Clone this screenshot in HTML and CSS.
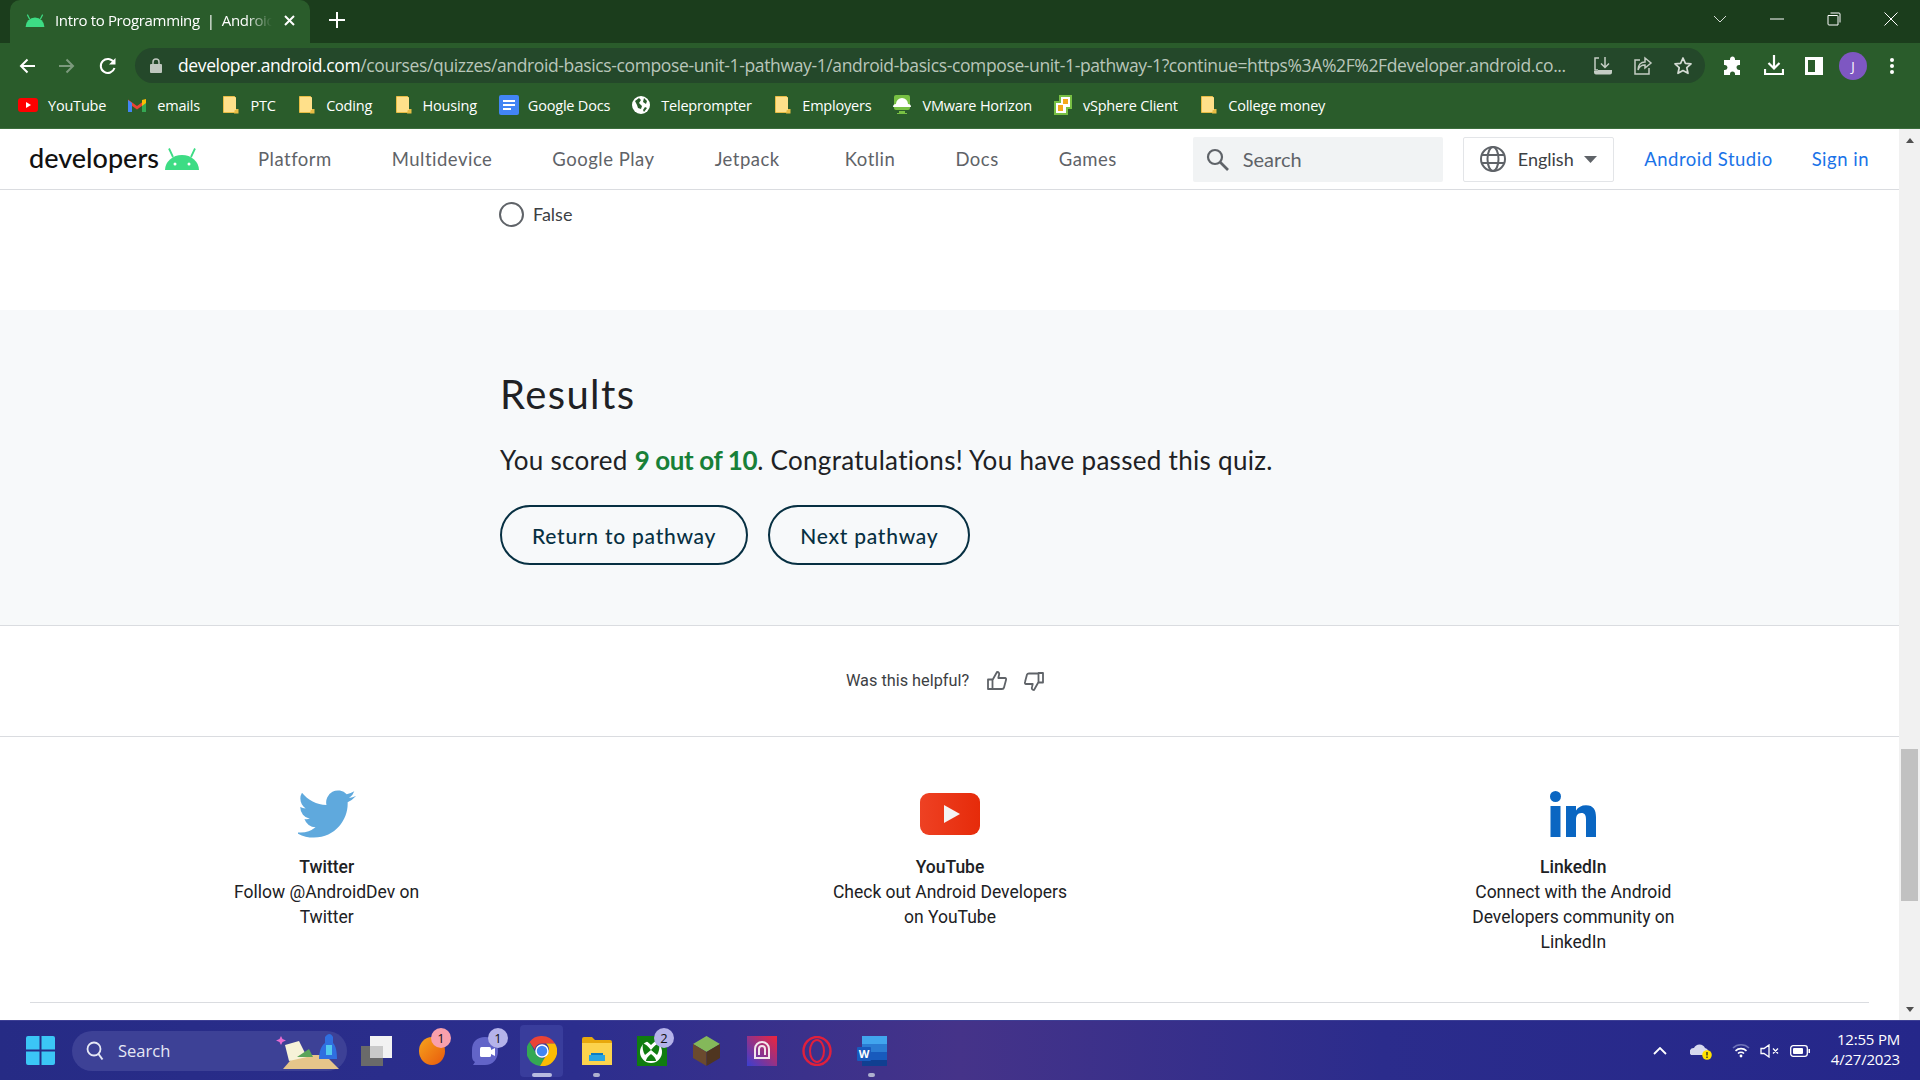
FILE: index.html
```html
<!DOCTYPE html>
<html lang="en">
<head>
<meta charset="utf-8">
<title>Intro to Programming | Android Developers</title>
<link rel="stylesheet" href="styles.css">
</head>
<body>
<div class="screen">
  <div class="tabstrip">
    <div class="tab">
      <svg class="fav" width="20" height="13" viewBox="0 0 34 22"><path fill="#3ddc84" d="M1 22a16 16 0 0 1 32 0z"/><path stroke="#3ddc84" stroke-width="2" d="M8 9 4 1M26 9l4-8"/></svg>
      <span class="tab-title">Intro to Programming&nbsp; |&nbsp; Android Developers</span>
      <svg class="tab-x" width="11" height="11" viewBox="0 0 11 11"><path stroke="#fff" stroke-width="2" d="M1 1l9 9M10 1l-9 9"/></svg>
    </div>
    <svg class="newtab" width="16" height="16" viewBox="0 0 16 16"><path stroke="#fff" stroke-width="2" d="M8 0v16M0 8h16"/></svg>
    <div class="winctl">
      <svg width="14" height="8" viewBox="0 0 14 8"><path fill="none" stroke="#d5dcd5" d="M1 1l6 6 6-6"/></svg>
      <svg width="14" height="2" viewBox="0 0 14 2"><path stroke="#fff" d="M0 1h14"/></svg>
      <svg width="14" height="14" viewBox="0 0 14 14"><path fill="none" stroke="#fff" d="M1 3.500h9a1 1 0 0 1 1 1V13H2a1 1 0 0 1-1-1zM3.500 1H12a1 1 0 0 1 1 1v8.500"/></svg>
      <svg width="14" height="14" viewBox="0 0 14 14"><path stroke="#fff" d="M.5.500l13 13M13.500.500l-13 13"/></svg>
    </div>
  </div>
  <div class="toolbar">
    <div class="nav-btns">
      <svg width="16" height="16" viewBox="0 0 16 16"><path fill="none" stroke="#fff" stroke-width="2" d="M16 8H2M8.500 1.500 2 8l6.500 6.500"/></svg>
      <svg width="18" height="16" viewBox="0 0 16 16"><path fill="none" stroke="#7c9a7d" stroke-width="2" d="M0 8h14M7.500 1.500 14 8l-6.500 6.500"/></svg>
      <svg width="18" height="18" viewBox="0 0 18 18"><path fill="none" stroke="#fff" stroke-width="2" d="M15.500 11a7 7 0 1 1-.7-5.700"/><path fill="#fff" d="M16.500 1v6.500H10z"/></svg>
    </div>
    <div class="omnibox">
      <svg width="12" height="15" viewBox="0 0 12 15"><path fill="none" stroke="#bfc7bf" stroke-width="1.500" d="M3 6V4a3 3 0 0 1 6 0v2"/><rect y="6" width="12" height="9" rx="1" fill="#bfc7bf"/></svg>
      <span class="url"><span class="url-host">developer.android.com</span>/courses/quizzes/android-basics-compose-unit-1-pathway-1/android-basics-compose-unit-1-pathway-1?continue=https%3A%2F%2Fdeveloper.android.co...</span>
      <div class="omni-icons">
        <svg width="20" height="20" viewBox="0 0 20 20"><path fill="none" stroke="#c4cdc4" stroke-width="1.500" d="M6 2H2v12h3M12 1v10M8 7.500l4 4 4-4"/><path fill="#c4cdc4" d="M1 15h18v1.500a2 2 0 0 1-2 2H3a2 2 0 0 1-2-2zM5 14h14v1H5z"/></svg>
        <svg width="20" height="20" viewBox="0 0 20 20"><path fill="none" stroke="#c4cdc4" stroke-width="1.500" d="M7 4H2v14h14v-6M12 2l6 5-6 5V9c-4 0-6 2-7 5 0-5 3-8 7-8z"/></svg>
        <svg width="20" height="20" viewBox="0 0 20 20"><path fill="none" stroke="#d5dcd5" stroke-width="1.700" stroke-linejoin="round" d="M10 2l2.400 5.300 5.600.6-4.200 3.800 1.200 5.600L10 14.500l-5 2.800 1.200-5.600L2 7.900l5.600-.6z"/></svg>
      </div>
    </div>
    <div class="tool-icons">
      <svg width="20" height="20" viewBox="0 0 20 20"><path fill="#fff" d="M8 1a2.500 2.500 0 0 1 4 2v1h5v5h-1a2.500 2.500 0 0 0 0 5h1v5h-5v-1a2.500 2.500 0 0 0-5 0v1H1v-5h1a2.500 2.500 0 0 0 0-5H1V4h6V3c0-.7.3-1.500 1-2z"/></svg>
      <svg width="20" height="21" viewBox="0 0 20 21"><path fill="none" stroke="#fff" stroke-width="2.200" d="M10 0v13M4.500 8l5.500 5.500L15.500 8M1 14v5h18v-5"/></svg>
      <svg width="18" height="18" viewBox="0 0 18 18"><path fill="#fff" d="M0 0h18v18H0zM3 3v12h7V3z" fill-rule="evenodd"/></svg>
      <span class="avatar">J</span>
      <svg class="kebab" width="4" height="16" viewBox="0 0 4 16"><circle cx="2" cy="2" r="2" fill="#fff"/><circle cx="2" cy="8" r="2" fill="#fff"/><circle cx="2" cy="14" r="2" fill="#fff"/></svg>
    </div>
  </div>
  <div class="bookmarks">
    <span class="bm bm-yt"><svg width="20" height="14" viewBox="0 0 20 14"><rect width="20" height="14" rx="3" fill="#f00"/><path fill="#fff" d="M8 4l5 3-5 3z"/></svg>YouTube</span>
    <span class="bm"><svg width="18" height="14" viewBox="0 0 18 14"><path fill="#ea4335" d="M0 1.500 9 8l9-6.500V5L9 11.500 0 5z"/><path fill="#4285f4" d="M0 2v12h4V5z"/><path fill="#34a853" d="M18 2v12h-4V5z"/><path fill="#fbbc04" d="M14 2l4-1v4l-4 3z"/></svg>emails</span>
    <span class="bm"><svg class="fold" width="16" height="18" viewBox="0 0 16 18"><use href="#folder"/></svg>PTC</span>
    <span class="bm"><svg class="fold" width="16" height="18" viewBox="0 0 16 18"><use href="#folder"/></svg>Coding</span>
    <span class="bm"><svg class="fold" width="16" height="18" viewBox="0 0 16 18"><use href="#folder"/></svg>Housing</span>
    <span class="bm bm-docs"><svg width="20" height="20" viewBox="0 0 20 20"><rect width="20" height="20" rx="2" fill="#4285f4"/><path fill="#fff" d="M4 5h12v2H4zM4 9h12v2H4zM4 13h8v2H4z"/></svg>Google Docs</span>
    <span class="bm"><svg width="18" height="18" viewBox="0 0 18 18"><circle cx="9" cy="9" r="9" fill="#fff"/><path fill="#2a5c2b" d="M3 5l4-3 2 2-2 3 3 3-1 3-3-1-1-3zM12 2l3 3-1 3-3-2zM13 11l2 1-3 4-1-2z"/></svg>Teleprompter</span>
    <span class="bm"><svg class="fold" width="16" height="18" viewBox="0 0 16 18"><use href="#folder"/></svg>Employers</span>
    <span class="bm"><svg width="18" height="20" viewBox="0 0 18 20"><path fill="#78c043" d="M1 2a2 2 0 0 1 2-2h12a2 2 0 0 1 2 2v11a2 2 0 0 1-2 2H3a2 2 0 0 1-2-2zM6 16h6v2h2v1H4v-1h2z"/><path fill="#fff" d="M0 12a3 3 0 0 1 3-3 6 6 0 0 1 12 0 3 3 0 0 1 3 3z"/></svg>VMware Horizon</span>
    <span class="bm"><svg width="18" height="20" viewBox="0 0 18 20"><path fill="#78c043" d="M5 0h13v14h-4v6H0V6h5z"/><path fill="#fff" d="M7 2h9v10H7zM2 8h10v10H2z"/><path fill="#f5a81c" d="M9 4h5v5H9zM4 10h5v6H4z"/></svg>vSphere Client</span>
    <span class="bm"><svg class="fold" width="16" height="18" viewBox="0 0 16 18"><use href="#folder"/></svg>College money</span>
    <svg class="defs" width="0" height="0"><defs><g id="folder"><path fill="#ffe08a" stroke="#e8bd45" d="M.5.500h11l1 1v15h-12z"/><path fill="#e8bd45" d="M12 13h3.500v4.500H11z"/><path fill="#ffe08a" d="M12 1h-.5v13H13V2z"/></g></defs></svg>
  </div>

  <div class="viewport">
    <div class="page">
      <header class="site-head">
        <div class="logo"><span class="logo-word">developers</span>
          <svg width="34" height="22" viewBox="0 0 34 22"><path fill="#3ddc84" d="M0 22a17 15 0 0 1 34 0z"/><path stroke="#3ddc84" stroke-width="1.800" d="M8 9 4 .500M26 9l4-8.500"/><circle cx="10" cy="16" r="1.500" fill="#fff"/><circle cx="24" cy="16" r="1.500" fill="#fff"/></svg>
        </div>
        <nav class="site-nav">
          <a>Platform</a><a>Multidevice</a><a>Google Play</a><a class="nav-jet">Jetpack</a><a>Kotlin</a><a>Docs</a><a>Games</a>
        </nav>
        <div class="search">
          <svg width="23" height="23" viewBox="0 0 23 23"><circle cx="9" cy="9" r="7" fill="none" stroke="#5f6368" stroke-width="2.200"/><path stroke="#5f6368" stroke-width="2.600" d="M14 14l8 8"/></svg>
          <span>Search</span>
        </div>
        <div class="lang">
          <svg width="26" height="26" viewBox="0 0 26 26"><g fill="none" stroke="#5f6368" stroke-width="2"><circle cx="13" cy="13" r="12"/><ellipse cx="13" cy="13" rx="5.500" ry="12"/><path d="M2 9h22M2 17h22"/></g></svg>
          <span>English</span>
          <svg width="13" height="7" viewBox="0 0 13 7"><path fill="#5f6368" d="M0 0h13L6.500 7z"/></svg>
        </div>
        <a class="head-link studio">Android Studio</a>
        <a class="head-link">Sign in</a>
      </header>

      <section class="question">
        <span class="radio"></span><span class="false-label">False</span>
      </section>

      <section class="results">
        <h1>Results</h1>
        <p class="score">You scored <span class="pass">9 out of 10</span>. Congratulations! You have passed this quiz.</p>
        <div class="actions"><a class="pill">Return to pathway</a><a class="pill">Next pathway</a></div>
      </section>

      <section class="helpful">
        <span>Was this helpful?</span>
        <svg width="20" height="20" viewBox="0 0 20 20"><path fill="none" stroke="#5f6368" stroke-width="1.800" stroke-linejoin="round" d="M1 8.500h4.500V18H1zM5.500 9 10 1c2 0 2.500 1.500 2 3l-.7 3H18c1 0 1.300 1 1 2l-2 7.500c-.2 1-1 1.500-2 1.500H5.500"/></svg>
        <svg width="20" height="20" viewBox="0 0 20 20"><path fill="none" stroke="#5f6368" stroke-width="1.800" stroke-linejoin="round" d="M19 11.500h-4.500V2H19zM14.500 11 10 19c-2 0-2.500-1.500-2-3l.7-3H2c-1 0-1.300-1-1-2l2-7.500C3.200 3 4 2.500 5 2.500h9.500"/></svg>
      </section>

      <section class="social">
        <div class="social-item">
          <div class="social-icon"><svg width="58" height="50" viewBox="0 0 24 20"><path fill="#5fa9dd" d="M23.953 2.570a10 10 0 0 1-2.825.775 4.958 4.958 0 0 0 2.163-2.723c-.951.555-2.005.959-3.127 1.184a4.920 4.920 0 0 0-8.384 4.482C7.690 6.095 4.067 4.130 1.640 1.162a4.822 4.822 0 0 0-.666 2.475c0 1.710.87 3.213 2.188 4.096a4.904 4.904 0 0 1-2.228-.616v.06a4.923 4.923 0 0 0 3.946 4.827 4.996 4.996 0 0 1-2.212.085 4.936 4.936 0 0 0 4.604 3.417A9.867 9.867 0 0 1 .170 17.611c-.39 0-.779-.023-1.170-.067a13.995 13.995 0 0 0 7.557 2.209c9.053 0 13.998-7.496 13.998-13.985 0-.21 0-.42-.015-.63A9.935 9.935 0 0 0 24 2.590z"/></svg></div>
          <div class="social-title">Twitter</div>
          <div>Follow @AndroidDev on Twitter</div>
        </div>
        <div class="social-item">
          <div class="social-icon"><svg width="60" height="42" viewBox="0 0 60 42"><defs><linearGradient id="yt" x1="0" x2="1" y1="0" y2="0"><stop offset="0" stop-color="#ee4123"/><stop offset="1" stop-color="#e62b0a"/></linearGradient></defs><rect width="60" height="42" rx="9" fill="url(#yt)"/><path fill="#f4f4f4" d="M24 12l16 9-16 9z"/></svg></div>
          <div class="social-title">YouTube</div>
          <div>Check out Android Developers on YouTube</div>
        </div>
        <div class="social-item">
          <div class="social-icon"><svg width="46" height="46" viewBox="0 0 46 46"><circle cx="5.500" cy="5.500" r="5.500" fill="#0a66c2"/><path fill="#0a66c2" d="M.5 15h10v31H.5zM16 15h10v4.500c2-3.300 5.500-5.300 10-5.300 7.500 0 10 4.800 10 12V46H36V28.500c0-4-1-6.500-4.700-6.500-4 0-5.300 3-5.300 6.800V46H16z"/></svg></div>
          <div class="social-title">LinkedIn</div>
          <div>Connect with the Android Developers community on LinkedIn</div>
        </div>
      </section>
      <div class="foot-rule"></div>
    </div>
    <div class="scrollbar">
      <span class="arrow-up"></span>
      <div class="track"><div class="thumb"></div></div>
      <span class="arrow-down"></span>
    </div>
  </div>

  <footer class="taskbar">
    <svg class="start" width="29" height="29" viewBox="0 0 29 29"><path fill="#3bc6f6" d="M0 2a2 2 0 0 1 2-2h11.500v13.500H0zM15.500 0H27a2 2 0 0 1 2 2v11.500H15.500zM0 15.500h13.500V29H2a2 2 0 0 1-2-2zM15.500 15.500H29V27a2 2 0 0 1-2 2H15.500z"/></svg>
    <div class="task-search">
      <svg width="18" height="20" viewBox="0 0 18 20"><circle cx="8" cy="8" r="6.500" fill="none" stroke="#e6e8f5" stroke-width="1.800"/><path stroke="#e6e8f5" stroke-width="2" d="M12.500 13l4 5.500"/></svg>
      <span>Search</span>
      <svg class="doodle" width="66" height="36" viewBox="0 0 66 36"><path fill="#e6c58a" d="M8 36l12-14h30l14 14z"/><path fill="#f6f2d8" d="M14 28 10 12l14-4 8 16z"/><path fill="#5aa45a" d="M22 24l12-8 4 8z"/><path fill="#2f6fe0" d="M50 4c3-4 6-4 8 0v6c3 3 4 9 4 16H44c0-7 2-13 6-16z"/><path fill="#52c9ee" d="M51 12h6v10h-6z"/><path fill="#e66bd0" d="M6 3l1.500 3L11 7.500 7.500 9 6 12 4.500 9 1 7.500 4.500 6z"/></svg>
    </div>
    <div class="task-apps">
      <span class="slot"><svg width="31" height="30" viewBox="0 0 31 30"><rect x="9" width="22" height="22" fill="#f2f2f2"/><rect y="10" width="22" height="20" fill="#6a6a6a"/><rect x="9" y="10" width="13" height="12" fill="#c9c9c9"/></svg></span>
      <span class="slot"><svg width="26" height="28" viewBox="0 0 26 28"><defs><linearGradient id="or" x1="0" x2="1" y1="0" y2="1"><stop offset="0" stop-color="#f7a41d"/><stop offset="1" stop-color="#e8590c"/></linearGradient></defs><ellipse cx="13" cy="14" rx="13" ry="14" fill="url(#or)"/></svg><b class="badge pink">1</b></span>
      <span class="slot slot-teams"><svg width="28" height="30" viewBox="0 0 28 30"><path fill="#6264c8" d="M14 1C6 1 1 6 1 14v6c0 3 1 5 3 6l-2 3h12c8 0 13-6 13-14S22 1 14 1z"/><rect x="9" y="11" width="11" height="10" rx="1.500" fill="#fff"/><path fill="#fff" d="M20 14l4-2v8l-4-2z"/></svg><b class="badge lav">1</b></span>
      <span class="slot slot-active"><svg width="30" height="30" viewBox="0 0 30 30"><path fill="#ea4335" d="M15 0a15 15 0 0 1 13 7.500H15a7.500 7.500 0 0 0-7.300 5.700L2.500 6A15 15 0 0 1 15 0z"/><path fill="#34a853" d="M2.500 6l6 10.500A7.500 7.500 0 0 0 18 22l-5 8A15 15 0 0 1 2.500 6z"/><path fill="#fbbc04" d="M28 7.500A15 15 0 0 1 13 30l6-10.500a7.500 7.500 0 0 0 0-12z"/><circle cx="15" cy="15" r="6" fill="#4285f4" stroke="#fff" stroke-width="1.500"/></svg><i class="run wide"></i></span>
      <span class="slot"><svg width="30" height="28" viewBox="0 0 30 28"><path fill="#e8a80c" d="M0 2a2 2 0 0 1 2-2h8l3 3h15a2 2 0 0 1 2 2v4H0z"/><path fill="#fcd34d" d="M0 6h30v22H0z"/><path fill="#0a7cc4" d="M9 16h12v2H9z"/><path fill="#29a4e0" d="M7 18h16v6H7z"/></svg><i class="run"></i></span>
      <span class="slot"><svg width="30" height="30" viewBox="0 0 30 30"><rect width="30" height="30" fill="#107c10"/><circle cx="14" cy="16" r="11" fill="#fff"/><path fill="#107c10" d="M14 14C10 9 7 7 6 8c-1 3 0 8 2 11zM14 14c4-5 7-7 8-6 1 3 0 8-2 11zM14 18c-3 2-5 5-5 7h10c0-2-2-5-5-7zM9 5h10c-2 1-3 2-5 4-2-2-3-3-5-4z"/></svg><b class="badge lav">2</b></span>
      <span class="slot"><svg width="27" height="30" viewBox="0 0 27 30"><path fill="#84b85a" d="M13.500 0 27 8 13.500 16 0 8z"/><path fill="#6b4a2e" d="M0 8l13.500 8v14L0 22z"/><path fill="#4f3520" d="M27 8 13.500 16v14L27 22z"/></svg></span>
      <span class="slot"><svg width="30" height="30" viewBox="0 0 30 30"><defs><linearGradient id="ap" x1="0" x2="1" y1="1" y2="0"><stop offset="0" stop-color="#3a3fd0"/><stop offset="1" stop-color="#f0243c"/></linearGradient></defs><rect width="30" height="30" fill="url(#ap)"/><path fill="none" stroke="#f3e6ec" stroke-width="2" d="M8 22V13a7 7 0 0 1 14 0v9zM12 19v-6a3 3 0 0 1 6 0v6"/></svg></span>
      <span class="slot"><svg width="30" height="30" viewBox="0 0 30 30"><ellipse cx="15" cy="15" rx="13.500" ry="14" fill="none" stroke="#e0203c" stroke-width="2.400"/><ellipse cx="15" cy="15" rx="7" ry="11" fill="none" stroke="#e0203c" stroke-width="2"/></svg></span>
      <span class="slot"><svg width="30" height="30" viewBox="0 0 30 30"><path fill="#41a5ee" d="M5 0h25v8H5z"/><path fill="#2b7cd3" d="M5 8h25v8H5z"/><path fill="#185abd" d="M5 16h25v8H5z"/><path fill="#103f91" d="M5 24h25v6H5z"/><rect y="11" width="14" height="14" rx="1" fill="#185abd"/><text class="word-w" x="7" y="22">W</text></svg><i class="run"></i></span>
    </div>
    <div class="tray">
      <svg width="14" height="8" viewBox="0 0 14 8"><path fill="none" stroke="#fff" stroke-width="1.800" d="M1 7l6-6 6 6"/></svg>
      <span class="tray-cloud"><svg width="22" height="18" viewBox="0 0 22 18"><path fill="#d7d9ee" d="M1 13a4 4 0 0 1 3-7 6 6 0 0 1 11 0 4 4 0 0 1 2 7z"/><circle cx="17" cy="13" r="4.800" fill="#ffe100"/><path stroke="#222" stroke-width="1.300" d="M17 10v3.500M17 14.500V16"/></svg></span>
      <svg width="18" height="15" viewBox="0 0 18 15"><g fill="none" stroke-width="1.600"><path stroke="#6f73b8" d="M1 5a11.500 11.500 0 0 1 16 0"/><path stroke="#fff" d="M3.500 7.800a8 8 0 0 1 11 0M6 10.500a4.300 4.300 0 0 1 6 0"/></g><circle cx="9" cy="13" r="1.400" fill="#fff"/></svg>
      <svg width="20" height="14" viewBox="0 0 20 14"><path fill="none" stroke="#fff" stroke-width="1.300" d="M1 4.500h3L9 1v12L4 9.500H1zM13 4.500l5 5M18 4.500l-5 5"/></svg>
      <svg width="20" height="12" viewBox="0 0 20 12"><rect x=".7" y=".7" width="16.600" height="10.600" rx="2.500" fill="none" stroke="#fff" stroke-width="1.300"/><rect x="3" y="3" width="10" height="6" rx="1" fill="#fff"/><rect x="18.500" y="4" width="1.500" height="4" fill="#fff"/></svg>
      <div class="clock"><span>12:55 PM</span><span>4/27/2023</span></div>
    </div>
  </footer>
</div>
</body>
</html>
```

FILE: styles.css
```css
* { box-sizing: border-box; }
html, body { margin: 0; height: 100%; overflow: hidden; }
body { font-family: "Roboto", "Liberation Sans", sans-serif; color: #202124; }
svg { display: block; flex: none; }
a { text-decoration: none; }

.screen { width: 1920px; height: 1080px; display: flex; flex-direction: column; }

/* browser chrome */
.tabstrip { height: 43px; background: #1b3d1c; display: flex; align-items: center; padding-left: 10px; }
.tab { width: 300px; height: 43px; background: #2a5c2b; border-radius: 10px 10px 0 0; display: flex; align-items: center; padding: 0 0 3px 15px; color: #fff; font: 15px "Open Sans", sans-serif; }
.fav { margin-right: 10px; }
.tab-title { width: 217px; white-space: nowrap; overflow: hidden; letter-spacing: -.35px; -webkit-mask-image: linear-gradient(to right, #000 88%, transparent); mask-image: linear-gradient(to right, #000 88%, transparent); }
.tab-x { margin-left: 12px; }
.newtab { margin: 0 0 3px 19px; }
.winctl { margin-left: auto; align-self: flex-start; display: flex; align-items: center; gap: 43px; padding-right: 22px; height: 37px; }

.toolbar { height: 48px; background: #2a5c2b; display: flex; align-items: center; padding: 5px 0 8px 19px; }
.nav-btns { display: flex; align-items: center; gap: 23px; width: 116px; }
.omnibox { width: 1570px; height: 35px; border-radius: 18px; background: #24482a; display: flex; align-items: center; padding-left: 15px; }
.url { margin: 0 0 1px 16px; width: 1410px; white-space: nowrap; overflow: hidden; font: 17.500px/24px "Open Sans", sans-serif; letter-spacing: -.37px; color: #b9c6ba; }
.url-host { color: #fff; }
.omni-icons { display: flex; gap: 20px; margin-left: 5px; }
.tool-icons { display: flex; align-items: center; margin-left: 18px; gap: 21px; }
.avatar { width: 28px; height: 28px; margin-left: -5px; border-radius: 50%; background: #7e57c2; color: #fff; display: flex; align-items: center; justify-content: center; font: 13px "Open Sans", sans-serif; }
.kebab { margin-left: 2px; }

.bookmarks { height: 38px; background: #2a5c2b; border-bottom: 1px solid #3c6e3d; display: flex; align-items: center; padding: 0 0 9px 18px; gap: 22px; color: #fff; font: 14.500px "Open Sans", sans-serif; letter-spacing: -.2px; }
.bm { display: flex; align-items: center; gap: 11px; white-space: nowrap; }
.bm-yt { gap: 10px; }
.bm-docs { gap: 9px; }
.bm .fold { margin-left: 1.500px; }
.defs { position: absolute; }

/* page */
.viewport { flex: 1; display: flex; min-height: 0; background: #fff; }
.page { width: 1899px; overflow: hidden; }
.site-head { height: 61px; border-bottom: 1px solid #dadce0; display: flex; align-items: center; padding: 0 30px 0 29px; font-family: "Lato", sans-serif; }
.logo { display: flex; align-items: center; gap: 6px; width: 229px; flex: none; }
.logo-word { font-size: 27px; font-weight: 500; color: #111; line-height: 1; padding-bottom: 3px; }
.site-nav { display: flex; gap: 60px; font-size: 18.500px; letter-spacing: .5px; color: #5f6368; }
.nav-jet { margin-right: 5px; }
.search { margin-left: auto; width: 250px; height: 45px; background: #f1f3f4; border-radius: 2px; display: flex; align-items: center; gap: 14px; padding-left: 13px; font-size: 20px; color: #5f6368; }
.lang { margin-left: 20px; width: 151px; height: 45px; border: 1px solid #e3e5e8; border-radius: 2px; display: flex; align-items: center; padding-left: 16px; font-size: 18px; color: #3c4043; }
.lang span { margin: 0 10px 0 12px; }
.head-link { font-size: 18.500px; letter-spacing: .5px; color: #1a73e8; }
.studio { margin: 0 39px 0 30.500px; }

.question { height: 120px; padding: 12px 0 0 499px; display: flex; align-items: flex-start; }
.radio { width: 25px; height: 25px; border: 2px solid #5f6368; border-radius: 50%; }
.false-label { margin-left: 9px; font: 18px/25px "Lato", sans-serif; color: #3c4043; }

.results { height: 316px; background: #f7f9fa; border-bottom: 1px solid #dadce0; padding: 60px 0 0 500px; font-family: "Lato", sans-serif; }
.results h1 { margin: 0; font-size: 40px; line-height: 48px; font-weight: 400; letter-spacing: 1.400px; color: #202124; }
.score { margin: 24px 0 0; font-size: 26px; line-height: 36px; letter-spacing: .3px; color: #202124; }
.pass { color: #188038; font-weight: 700; letter-spacing: -.4px; }
.actions { margin-top: 27px; display: flex; gap: 20px; }
.pill { height: 60px; padding: 0 30px; border: 2px solid #073042; border-radius: 30px; display: flex; align-items: center; font-size: 21px; letter-spacing: .75px; color: #073042; font-weight: 500; }

.helpful { height: 111px; border-bottom: 1px solid #dadce0; display: flex; align-items: center; justify-content: center; font-size: 16.300px; color: #3c4043; padding: 0 9px 1px 0; }
.helpful span { margin-right: 18px; }
.helpful svg + svg { margin-left: 17px; }

.social { display: grid; grid-template-columns: repeat(3, 1fr); padding: 51px 14px 47px 15px; height: 265px; font-size: 17.500px; line-height: 25px; text-align: center; color: #202124; }
.social-item { width: 240px; justify-self: center; }
.social-icon { height: 52px; margin-bottom: 15px; display: flex; align-items: center; justify-content: center; }
.social-title { font-weight: 500; }
.foot-rule { height: 1px; margin: 0 30px; background: #dadce0; }

.scrollbar { width: 21px; background: #f1f1f1; display: flex; flex-direction: column; align-items: center; padding: 9px 0 8px; }
.track { flex: 1; width: 100%; padding-top: 606px; }
.thumb { height: 152px; margin: 0 2px; background: #c1c1c1; }
.arrow-up, .arrow-down { width: 0; height: 0; border-left: 4px solid transparent; border-right: 4px solid transparent; }
.arrow-up { border-bottom: 5px solid #505050; }
.arrow-down { border-top: 5px solid #505050; }

/* taskbar */
.taskbar { height: 60px; flex: none; display: flex; align-items: center; padding-left: 26px; color: #fff; background: linear-gradient(to right, #262b85 0, #2c2e8e 30%, #453389 50%, #2b2c8c 72%, #25278a 100%); border-top: 1px solid #3d3f95; }
.task-search { margin-left: 17px; width: 275px; height: 40px; border-radius: 20px; background: #3d4196; display: flex; align-items: center; padding-left: 14px; font: 16.500px "Open Sans", sans-serif; color: #e6e8f5; }
.task-search span { margin-left: 14px; }
.doodle { margin-left: auto; margin-right: 6px; }
.task-apps { display: flex; align-items: center; margin-left: 2px; }
.slot { position: relative; width: 55px; height: 54px; display: flex; align-items: center; justify-content: center; }
.slot-teams svg { margin-right: 3px; }
.slot-active::before { content: ""; position: absolute; left: 6px; right: 6px; top: 1px; bottom: 1px; background: #393d9c; border-radius: 4px; }
.slot-active svg { position: relative; }
.badge { position: absolute; top: 4px; right: 5px; width: 20px; height: 20px; border-radius: 50%; font: 400 13px/20px "Open Sans", sans-serif; color: #111; text-align: center; }
.pink { background: #f9a0ac; right: 8px; }
.lav { background: #b5b3ea; }
.slot-teams .badge { right: 6px; }
.run { position: absolute; bottom: 1px; left: 50%; width: 7px; height: 4px; margin-left: -3.500px; border-radius: 2px; background: #aeb0cf; }
.run.wide { width: 20px; margin-left: -10px; background: #b8bbe0; }
.word-w { font: 700 11px "Open Sans", sans-serif; fill: #fff; text-anchor: middle; }
.tray { margin-left: auto; display: flex; align-items: center; padding-right: 20px; }
.tray-cloud { margin: 0 20px 0 23px; }
.tray svg + svg { margin-left: 10px; }
.tray .tray-cloud + svg { margin-left: 0; }
.clock { margin: 0 0 3px 21px; display: flex; flex-direction: column; align-items: flex-end; font: 15px/20px "Open Sans", sans-serif; letter-spacing: -.2px; }
```
